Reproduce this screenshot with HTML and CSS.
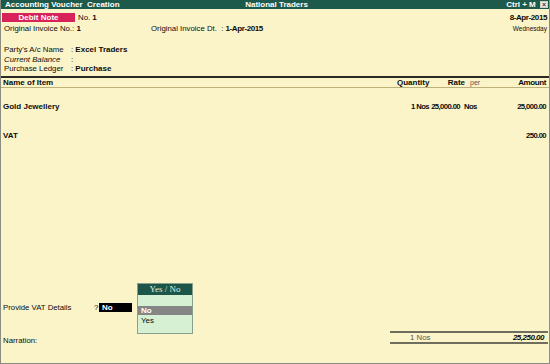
FILE: index.html
```html
<!DOCTYPE html>
<html lang="en">
<head>
  <meta charset="UTF-8" />
  <meta name="viewport" content="width=device-width, initial-scale=1.0" />
  <title>Accounting Voucher Creation</title>
  <link rel="stylesheet" href="styles.css">
</head>
<body>
<div class="window">
  <div class="titlebar">
    <span class="tb-left">Accounting Voucher  Creation</span>
    <span class="tb-center">National Traders</span>
    <span class="tb-right">Ctrl + M <span class="close-box">&times;</span></span>
  </div>

  <div class="head">
    <div class="row">
      <span class="badge">Debit Note</span>
      <span class="voucher-no">No. <b>1</b></span>
      <span class="grow"></span>
      <b class="num">8-Apr-2015</b>
    </div>
    <div class="row row2">
      <span class="inv-no">Original Invoice No.: <b>1</b></span>
      <span>Original Invoice Dt. &nbsp;: <b class="num">1-Apr-2015</b></span>
      <span class="grow"></span>
      <span class="weekday">Wednesday</span>
    </div>

    <div class="party">
      <div class="field"><span class="lbl">Party's A/c Name</span>: <b>Excel Traders</b></div>
      <div class="field"><span class="lbl"><i>Current Balance</i></span>:</div>
      <div class="field"><span class="lbl">Purchase Ledger</span>: <b>Purchase</b></div>
    </div>
  </div>

  <div class="table-head">
    <span>Name of Item</span>
    <span class="r">Quantity</span>
    <span class="r">Rate</span>
    <span class="per">per</span>
    <span class="r num">Amount</span>
  </div>

  <div class="item gold">
    <span>Gold Jewellery</span>
    <span class="r num">1 Nos</span>
    <span class="r num">25,000.00</span>
    <span class="per num">Nos</span>
    <span class="r num">25,000.00</span>
  </div>
  <div class="item vat">
    <span>VAT</span>
    <span></span>
    <span></span>
    <span></span>
    <span class="r num">250.00</span>
  </div>

  <div class="grow"></div>

  <div class="vat-row">
    <span class="vat-label">Provide VAT Details</span>
    <span class="q">?</span>
    <span class="answer">No</span>
  </div>

  <div class="footer">
    <span class="narration">Narration:</span>
    <div class="totals">
      <span class="tot-qty">1 Nos</span>
      <span class="tot-amt num">25,250.00</span>
    </div>
  </div>

  <div class="popup">
    <div class="popup-title">Yes / No</div>
    <div class="popup-body">
      <div class="opt selected">No</div>
      <div class="opt">Yes</div>
    </div>
  </div>
</div>
</body>
</html>
```

FILE: styles.css
```css
* {
  box-sizing: border-box;
}
body {
  margin: 0;
  font-family: "Liberation Sans", Arial, sans-serif;
  font-size: 7.8px;
  color: #0c0c0c;
  background: #fbf4c9;
}
b {
  font-size: 8px;
}
.num {
  letter-spacing: -0.4px;
}
.window {
  position: relative;
  width: 550px;
  height: 364px;
  display: flex;
  flex-direction: column;
  background: #fbf4c9;
  border-left: 1px solid #8c8c80;
  border-right: 1px solid #8c8c80;
  border-bottom: 1px solid #8c8c80;
}
.grow {
  flex: 1;
}

/* title bar */
.titlebar {
  height: 9px;
  line-height: 9px;
  background: #1e5a4b;
  color: #fff;
  font-weight: bold;
  font-size: 8px;
  display: flex;
  padding: 0 1px 0 4px;
  white-space: pre;
}
.tb-left, .tb-right {
  flex: 1;
}
.tb-right {
  text-align: right;
}
.close-box {
  display: inline-block;
  width: 8px;
  height: 7px;
  line-height: 6px;
  margin-left: 2px;
  border: 1px solid #c8d2ca;
  background: #e6ebe6;
  color: #3a3a3a;
  font-size: 7px;
  text-align: center;
  vertical-align: 0;
}

/* voucher header */
.head {
  padding: 4px 2px 0 1px;
}
.row {
  display: flex;
  height: 9px;
  line-height: 9px;
}
.row2 {
  margin-top: 2px;
  padding-left: 2px;
}
.badge {
  width: 73px;
  background: #d8235a;
  color: #fff;
  font-weight: bold;
  font-size: 8px;
  text-align: center;
}
.voucher-no {
  margin-left: 3px;
}
.inv-no {
  width: 147px;
}
.weekday {
  font-size: 6.5px;
}
.party {
  margin-top: 12px;
  padding-left: 2px;
}
.field {
  height: 9.5px;
  line-height: 9.5px;
}
.lbl {
  display: inline-block;
  width: 67px;
}

/* items */
.table-head, .item {
  display: grid;
  padding: 0 3px 0 2px;
  height: 9px;
  line-height: 9px;
  font-weight: bold;
  font-size: 8px;
}
.table-head {
  margin-top: 2px;
  grid-template-columns: 1fr 32px 36px 30px 51px;
  border-top: 2px solid #2a2a22;
  border-bottom: 1px solid #bdb07a;
  height: 12px;
}
.table-head .per {
  padding-left: 5px;
  font-weight: normal;
  font-size: 7px;
  color: #555;
}
.item {
  grid-template-columns: 1fr 32px 31px 35px 51px;
}
.item .num {
  font-size: 7.7px;
  letter-spacing: -0.6px;
}
.item .per {
  padding-left: 4px;
}
.r {
  text-align: right;
}
.gold {
  margin-top: 14px;
}
.vat {
  margin-top: 20px;
}

/* bottom part */
.vat-row {
  display: flex;
  height: 9px;
  line-height: 9px;
  padding-left: 2px;
}
.vat-label {
  width: 91px;
}
.q {
  width: 5px;
}
.answer {
  width: 33px;
  background: #000;
  color: #fff;
  font-weight: bold;
  font-size: 8px;
  padding-left: 3px;
}
.footer {
  display: flex;
  margin-top: 19px;
  margin-bottom: 18px;
  padding-left: 2px;
  padding-right: 1px;
}
.narration {
  flex: 1;
  padding-top: 5px;
  line-height: 9px;
}
.totals {
  width: 158px;
  display: flex;
  height: 13px;
  line-height: 9px;
  border-top: 2px solid #6f6d5e;
  border-bottom: 2px solid #6f6d5e;
  padding: 0 4px 0 20px;
}
.tot-qty {
  flex: 1;
  color: #555;
}
.tot-amt {
  font-weight: bold;
  font-style: italic;
  font-size: 8px;
  letter-spacing: -0.5px;
}

/* Yes / No list */
.popup {
  position: absolute;
  left: 136px;
  top: 283px;
  width: 56px;
  height: 51px;
  border: 1px solid #8aa08e;
  background: #d5f0d3;
}
.popup-title {
  height: 11px;
  line-height: 11px;
  background: #1d5649;
  color: #dcefe2;
  font-family: "Liberation Serif", "Times New Roman", serif;
  font-size: 9px;
  text-align: center;
}
.popup-body {
  padding-top: 11px;
}
.opt {
  height: 9px;
  line-height: 9px;
  padding-left: 3px;
  font-size: 8px;
}
.opt.selected {
  background: #858585;
  color: #fff;
  font-weight: bold;
  margin-bottom: 1px;
}
```
